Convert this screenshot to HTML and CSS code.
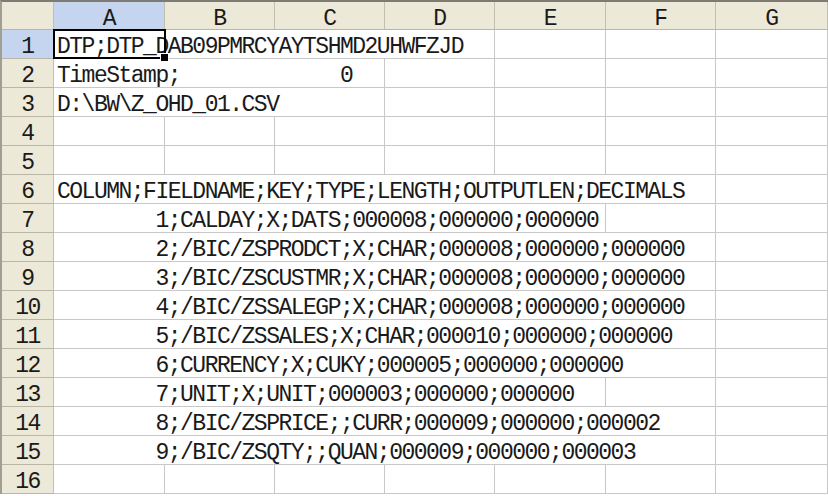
FILE: index.html
```html
<!DOCTYPE html>
<html lang="en">
<head>
    <meta charset="UTF-8">
    <title>Z_OHD_01.CSV</title>
    <link rel="stylesheet" href="styles.css">
</head>
<body>
    <div class="sheet">
        <div class="corner"></div>
        <div class="col-head active">A</div>
        <div class="col-head">B</div>
        <div class="col-head">C</div>
        <div class="col-head">D</div>
        <div class="col-head">E</div>
        <div class="col-head">F</div>
        <div class="col-head">G</div>

        <div class="row-head active">1</div>
        <div class="cell span-4">DTP;DTP_DAB09PMRCYAYTSHMD2UHWFZJD<span class="selection"><span class="handle"></span></span></div>
        <div class="cell"></div><div class="cell"></div><div class="cell"></div>

        <div class="row-head">2</div>
        <div class="cell span-3">TimeStamp;             0</div>
        <div class="cell"></div><div class="cell"></div><div class="cell"></div><div class="cell"></div>

        <div class="row-head">3</div>
        <div class="cell span-3">D:\BW\Z_OHD_01.CSV</div>
        <div class="cell"></div><div class="cell"></div><div class="cell"></div><div class="cell"></div>

        <div class="row-head">4</div>
        <div class="cell"></div><div class="cell"></div><div class="cell"></div><div class="cell"></div>
        <div class="cell"></div><div class="cell"></div><div class="cell"></div>

        <div class="row-head">5</div>
        <div class="cell"></div><div class="cell"></div><div class="cell"></div><div class="cell"></div>
        <div class="cell"></div><div class="cell"></div><div class="cell"></div>

        <div class="row-head">6</div>
        <div class="cell span-6">COLUMN;FIELDNAME;KEY;TYPE;LENGTH;OUTPUTLEN;DECIMALS</div>
        <div class="cell"></div>

        <div class="row-head">7</div>
        <div class="cell span-5">        1;CALDAY;X;DATS;000008;000000;000000</div>
        <div class="cell"></div><div class="cell"></div>

        <div class="row-head">8</div>
        <div class="cell span-6">        2;/BIC/ZSPRODCT;X;CHAR;000008;000000;000000</div>
        <div class="cell"></div>

        <div class="row-head">9</div>
        <div class="cell span-6">        3;/BIC/ZSCUSTMR;X;CHAR;000008;000000;000000</div>
        <div class="cell"></div>

        <div class="row-head">10</div>
        <div class="cell span-6">        4;/BIC/ZSSALEGP;X;CHAR;000008;000000;000000</div>
        <div class="cell"></div>

        <div class="row-head">11</div>
        <div class="cell span-6">        5;/BIC/ZSSALES;X;CHAR;000010;000000;000000</div>
        <div class="cell"></div>

        <div class="row-head">12</div>
        <div class="cell span-6">        6;CURRENCY;X;CUKY;000005;000000;000000</div>
        <div class="cell"></div>

        <div class="row-head">13</div>
        <div class="cell span-5">        7;UNIT;X;UNIT;000003;000000;000000</div>
        <div class="cell"></div><div class="cell"></div>

        <div class="row-head">14</div>
        <div class="cell span-6">        8;/BIC/ZSPRICE;;CURR;000009;000000;000002</div>
        <div class="cell"></div>

        <div class="row-head">15</div>
        <div class="cell span-6">        9;/BIC/ZSQTY;;QUAN;000009;000000;000003</div>
        <div class="cell"></div>

        <div class="row-head">16</div>
        <div class="cell"></div><div class="cell"></div><div class="cell"></div><div class="cell"></div>
        <div class="cell"></div><div class="cell"></div><div class="cell"></div>
    </div>
</body>
</html>
```

FILE: styles.css
```css
body {
    margin: 0;
    padding: 0;
    background-color: white;
    overflow: hidden;
}
.sheet {
    display: grid;
    grid-template-columns: 52px 111px 110px 110px 110px 111px 110px 1fr;
    grid-template-rows: 28px;
    grid-auto-rows: 29px;
    border-top: 2px solid #7d7b72;
    border-left: 2px solid #a19f94;
    font-family: "Liberation Mono", "DejaVu Sans Mono", monospace;
    font-size: 23px;
    letter-spacing: -1.5px;
    color: #1a1a1a;
}
.sheet > div {
    box-sizing: border-box;
    white-space: pre;
}
.corner,
.col-head,
.row-head {
    background-color: #ece9d8;
    border-right: 1px solid #c2bfb1;
    border-bottom: 1px solid #b9b6a8;
    text-align: center;
    line-height: 21px;
    padding-top: 7px;
}
.col-head.active,
.row-head.active {
    background-color: #c5d5ef;
}
.col-head.active {
    border-bottom-color: #8ea5cf;
}
.row-head.active {
    border-right-color: #8ea5cf;
}
.cell {
    border-right: 1px solid #c8c8c8;
    border-bottom: 1px solid #c8c8c8;
    padding: 7px 0 0 3px;
    line-height: 21px;
    position: relative;
}
.span-3 { grid-column: span 3; }
.span-4 { grid-column: span 4; }
.span-5 { grid-column: span 5; }
.span-6 { grid-column: span 6; }

/* active cell outline over A1 */
.selection {
    position: absolute;
    top: -1px;
    left: -1px;
    width: 113px;
    height: 30px;
    box-sizing: border-box;
    border: 2px solid #000;
}
.handle {
    position: absolute;
    right: -5px;
    bottom: -5px;
    width: 7px;
    height: 7px;
    background-color: #000;
    border: 1px solid #fff;
}
```
